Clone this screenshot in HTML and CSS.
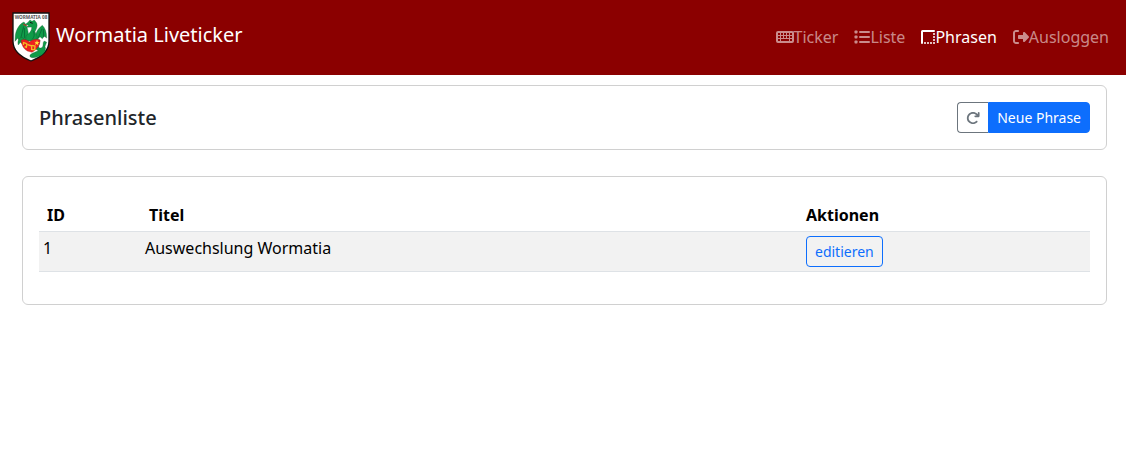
FILE: index.html
```html
<!DOCTYPE html>
<html lang="de">
    <head>
        <meta charset="utf-8">
        <meta name="viewport" content="width=device-width, initial-scale=1">
        <title>Wormatia Liveticker</title>
        <link rel="stylesheet" href="styles.css">
    </head>
    <body>
        <nav class="navbar">
            <a class="brand" href="#">
                <svg class="logo" viewBox="0 0 114 150" aria-hidden="true">
                    <path d="M3 3H111V88C111 116 86 136 57 147C28 136 3 116 3 88Z" fill="#fff" stroke="#111" stroke-width="4"/>
                    <text class="logo-text" x="57" y="20" text-anchor="middle">WORMATIA 08</text>
                    <g fill="#109b48" stroke="#17552e" stroke-width="1">
                        <path d="M50 70C48 57 47 44 36 30C24 34 13 51 10 69L9 88L17 79L22 86L31 79L37 86L50 80Z"/>
                        <path d="M71 68C74 57 79 49 91 40C99 48 104 60 104 78L97 73L91 80L84 74L77 82L68 79Z"/>
                        <path d="M39 38L49 30L54 24L60 28L67 24L74 33C78 43 72 52 69 59L76 75L73 88L41 87L42 71C52 65 60 55 59 45L43 46L50 39Z"/>
                        <path d="M73 81L84 84L82 96C77 104 80 111 89 107C97 102 90 92 97 87L104 91L99 103C106 119 87 137 64 137C52 138 50 129 61 124L79 116C67 112 68 101 78 97Z"/>
                        <path d="M30 76C22 77 15 86 19 99L25 91L31 95L40 84Z"/>
                    </g>
                    <path d="M34 37L44 41" fill="none" stroke="#d22" stroke-width="3"/>
                    <path d="M27 85C36 80 45 82 53 90C61 82 72 80 84 84C84 98 78 110 60 121L46 117C36 112 29 101 27 85Z" fill="#ed2020" stroke="#8d1717" stroke-width="1"/>
                    <path d="M33 91L44 95M35 91L34 99M45 94L43 106L38 104M47 98L60 102M59 101V112L68 113L69 102L59 100" fill="none" stroke="#f3bd25" stroke-width="4"/>
                    <path d="M75 84L77 90L83 91L78 94L79 100L74 96L69 99L71 93L67 89L73 90Z" fill="#ffe13a"/>
                    <path d="M35 43L27 76M37 48L38 78M90 50L79 77M94 51L95 75M63 56C69 65 67 76 60 82" fill="none" stroke="#087139" stroke-width="3"/>
                    <path d="M54 31L62 34" fill="none" stroke="#111" stroke-width="3"/>
                </svg>
                Wormatia Liveticker
            </a>
            <div class="nav-links">
                <a class="nav-link" href="#">
                    <svg class="icon icon-keyboard" viewBox="0 0 576 512" aria-hidden="true">
                        <path fill-rule="evenodd" d="M64 64H512A64 64 0 0 1 576 128V384A64 64 0 0 1 512 448H64A64 64 0 0 1 0 384V128A64 64 0 0 1 64 64ZM64 128v64h64v-64zM160 128v64h64v-64zM256 128v64h64v-64zM352 128v64h64v-64zM448 128v64h64v-64zM64 224v64h64v-64zM160 224v64h64v-64zM256 224v64h64v-64zM352 224v64h64v-64zM448 224v64h64v-64zM64 320v64h64v-64zM160 320v64h256v-64zM448 320v64h64v-64z"/>
                    </svg>Ticker</a>
                <a class="nav-link" href="#">
                    <svg class="icon" viewBox="0 0 512 512" aria-hidden="true">
                        <rect x="16" y="48" width="96" height="96" rx="24"/>
                        <rect x="16" y="208" width="96" height="96" rx="24"/>
                        <rect x="16" y="368" width="96" height="96" rx="24"/>
                        <rect x="160" y="64" width="352" height="64" rx="32"/>
                        <rect x="160" y="224" width="352" height="64" rx="32"/>
                        <rect x="160" y="384" width="352" height="64" rx="32"/>
                    </svg>Liste</a>
                <a class="nav-link active" href="#">
                    <svg class="icon icon-border" viewBox="0 0 448 512" aria-hidden="true">
                        <path d="M0 448a32 32 0 0 0 64 0V96H416a32 32 0 0 0 0-64H48A48 48 0 0 0 0 80Z"/>
                        <circle cx="128" cy="448" r="32"/>
                        <circle cx="224" cy="448" r="32"/>
                        <circle cx="320" cy="448" r="32"/>
                        <circle cx="416" cy="448" r="32"/>
                        <circle cx="416" cy="352" r="32"/>
                        <circle cx="416" cy="256" r="32"/>
                        <circle cx="416" cy="160" r="32"/>
                    </svg>Phrasen</a>
                <a class="nav-link" href="#">
                    <svg class="icon" viewBox="0 0 512 512" aria-hidden="true">
                        <path d="M378 106L501 229c7 7 11 17 11 27s-4 20-11 27L378 406c-6 6-15 10-24 10c-19 0-34-15-34-34V320H192c-18 0-32-14-32-32v-64c0-18 14-32 32-32h128v-62c0-19 15-34 34-34c9 0 18 4 24 10zM160 96H96c-18 0-32 14-32 32v256c0 18 14 32 32 32h64c18 0 32 14 32 32s-14 32-32 32H96c-53 0-96-43-96-96V128C0 75 43 32 96 32h64c18 0 32 14 32 32s-14 32-32 32z"/>
                    </svg>Ausloggen</a>
            </div>
        </nav>

        <main>
            <div class="card card-header">
                <h1 class="title">Phrasenliste</h1>
                <div class="btn-group">
                    <button class="btn btn-refresh" type="button" aria-label="Aktualisieren">
                        <svg class="icon icon-redo" viewBox="0 0 512 512" aria-hidden="true">
                            <path d="M386 160H336c-18 0-32 14-32 32s14 32 32 32H464c18 0 32-14 32-32V64c0-18-14-32-32-32s-32 14-32 32v51L414 98c-87-88-229-88-316 0s-88 229 0 316s229 88 316 0c13-12 13-32 0-45s-32-13-45 0c-62 63-164 63-226 0s-63-164 0-226s164-63 226 0L386 160z"/>
                        </svg>
                    </button>
                    <button class="btn btn-primary" type="button">Neue Phrase</button>
                </div>
            </div>

            <div class="card">
                <table class="table">
                    <thead>
                        <tr>
                            <th class="col-id">ID</th>
                            <th class="col-title">Titel</th>
                            <th class="col-actions">Aktionen</th>
                        </tr>
                    </thead>
                    <tbody>
                        <tr>
                            <td>1</td>
                            <td>Auswechslung Wormatia</td>
                            <td><button class="btn btn-outline" type="button">editieren</button></td>
                        </tr>
                    </tbody>
                </table>
            </div>
        </main>
    </body>
</html>
```
FILE: styles.css
```css
* {
    box-sizing: border-box;
}

body {
    margin: 0;
    background: #fff;
    color: #212529;
    font-family: "Noto Sans", "Liberation Sans", sans-serif;
    font-size: 16px;
    line-height: 24px;
}

/* Navigation */
.navbar {
    display: flex;
    align-items: center;
    justify-content: space-between;
    padding: 12px 9px 13px 12px;
    background: #8b0000;
}

.brand {
    display: flex;
    gap: 6px;
    color: #fff;
    font-size: 20px;
    line-height: 46px;
    text-decoration: none;
}

.logo {
    width: 38px;
    height: 50px;
}

.logo-text {
    font-family: "Noto Sans", sans-serif;
    font-size: 14px;
    font-weight: bold;
    fill: #555;
}

.nav-links {
    display: flex;
}

.nav-link {
    display: flex;
    align-items: center;
    padding: 8px;
    color: rgba(255, 255, 255, 0.55);
    text-decoration: none;
}

.nav-link.active {
    color: #fff;
}

.icon {
    display: block;
    width: 16px;
    height: 16px;
    fill: currentColor;
}

.icon-keyboard {
    width: 18px;
}

.icon-border {
    width: 14px;
}

.icon-redo {
    width: 14px;
    height: 14px;
}

/* Cards */
main {
    display: flex;
    flex-direction: column;
    gap: 26px;
    padding: 10px 19px 10px 22px;
}

.card {
    padding: 16px;
    border: 1px solid #d0d0d0;
    border-radius: 6px;
}

.card-header {
    display: flex;
    align-items: center;
    justify-content: space-between;
}

.title {
    margin: 0;
    font-size: 20px;
    font-weight: 500;
    line-height: 24px;
}

/* Buttons */
.btn {
    padding: 4px 8px;
    border: 1px solid;
    border-radius: 4px;
    font-family: inherit;
    font-size: 14px;
    line-height: 21px;
    cursor: pointer;
}

.btn-group {
    display: flex;
}

.btn-refresh {
    border-color: #6c757d;
    border-right: 0;
    border-radius: 4px 0 0 4px;
    background: #fff;
    color: #6c757d;
}

.btn-primary {
    border-color: #0d6efd;
    border-radius: 0 4px 4px 0;
    background: #0d6efd;
    color: #fff;
}

.btn-outline {
    display: block;
    border-color: #0d6efd;
    background: transparent;
    color: #0d6efd;
}

/* Table */
.table {
    width: 100%;
    margin-bottom: 16px;
    border-spacing: 0;
    color: #000;
    table-layout: fixed;
}

th,
td {
    padding: 4px;
    border-bottom: 1px solid #dee2e6;
    text-align: left;
    vertical-align: top;
}

th {
    padding: 10px 8px 4px;
}

td {
    background: #f2f2f2;
}

.col-id {
    width: 102px;
}

.col-actions {
    width: 288px;
    padding-left: 4px;
}
```
